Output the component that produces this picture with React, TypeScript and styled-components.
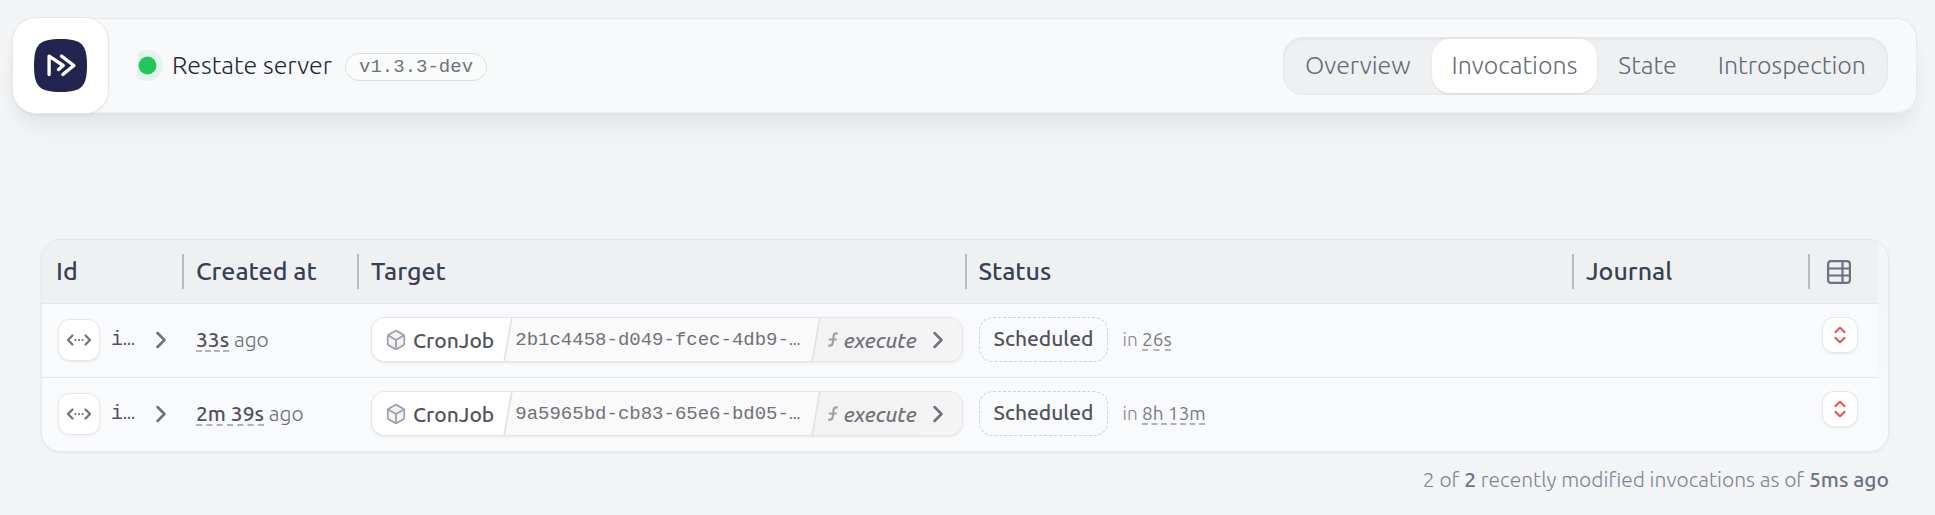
import React from "react";
import styled, { createGlobalStyle, css } from "styled-components";
import { Box, ChevronRight, ChevronsUpDown } from "lucide-react";

const sans = `Ubuntu, "Noto Sans", sans-serif`;
const mono = `"Liberation Mono", monospace`;

const GlobalStyle = createGlobalStyle`
  * { box-sizing: border-box; }
  body {
    margin: 0;
    background: #f3f4f6;
    font-family: ${sans};
    font-size: 21px;
    line-height: 28px;
    color: #52525b;
  }
  button { font: inherit; color: inherit; margin: 0; cursor: pointer; }
  svg { display: block; flex: none; }
`;

const Page = styled.div`
  padding: 18px 18px 24px 12px;
`;

const Header = styled.header`
  display: flex;
  align-items: center;
  height: 95px;
  padding-right: 28px;
  border: 1px solid #e5e7eb;
  border-bottom-color: #eceef1;
  border-left: 0;
  border-radius: 24px 20px 20px 24px;
  background: #f8f9fb;
  box-shadow: 0 12px 18px -4px rgba(0, 0, 0, 0.05), 0 24px 30px -6px rgba(0, 0, 0, 0.03);
`;

const LogoButton = styled.button`
  display: flex;
  align-items: center;
  justify-content: center;
  width: 97px;
  height: 97px;
  padding: 0;
  border: 1px solid #e5e7eb;
  border-radius: 24px;
  background: #fff;
  box-shadow: 0 1px 3px rgba(0, 0, 0, 0.05);
`;

const Server = styled.div`
  display: flex;
  align-items: center;
  flex: 1;
  margin-left: 28px;
`;

const ServerName = styled.span`
  margin: 0 13px 0 9px;
  padding-bottom: 2px;
  font-size: 25px;
  font-weight: 300;
  line-height: 32px;
  color: #1f2937;
`;

const Version = styled.span`
  margin-top: 3px;
  padding: 0 13px;
  border: 1px solid #dcdee2;
  border-radius: 14px;
  background: #fafbfb;
  font-family: ${mono};
  font-size: 19px;
  line-height: 26px;
  color: #71717a;
`;

const Tabs = styled.nav`
  display: flex;
  gap: 1px;
  padding: 1px;
  border: 1px solid #e5e7eb;
  border-radius: 20px;
  background: #eff0f2;
  box-shadow: inset 0 2px 2px rgba(0, 0, 0, 0.04);
`;

const Tab = styled.a<{ $active?: boolean }>`
  padding: 10px 20px 12px;
  border-radius: 18px;
  font-size: 25px;
  font-weight: 300;
  line-height: 32px;
  color: #646b79;
  text-decoration: none;
  ${(p) =>
    p.$active &&
    css`
      background: #fff;
      box-shadow: 0 1px 2px rgba(0, 0, 0, 0.1);
    `}
`;

const Main = styled.main`
  padding: 126px 28px 0 29px;
`;

const Card = styled.div`
  overflow: hidden;
  padding-right: 10px;
  border: 1px solid #e5e7eb;
  border-radius: 20px;
  background: linear-gradient(#f3f4f6, #f9fafb);
  box-shadow: 0 1px 3px rgba(0, 0, 0, 0.06);
`;

const Table = styled.table`
  width: 100%;
  table-layout: fixed;
  border-collapse: separate;
  border-spacing: 0;
`;

const Col = styled.col<{ $width?: number }>`
  width: ${(p) => (p.$width ? `${p.$width}px` : "auto")};
`;

const HeadLabel = styled.div<{ $divided?: boolean }>`
  display: flex;
  align-items: center;
  height: 35px;
  padding-left: 12px;
  line-height: 35px;
  border-right: ${(p) => (p.$divided ? "2px solid #b6bcc6" : "0")};
`;

const HeadCell = styled.th`
  height: 63px;
  padding: 0;
  background: #eff0f2;
  text-align: left;
  font-weight: 500;
  font-size: 25px;
  color: #374151;
  &:first-child ${HeadLabel} { padding-left: 14px; }
`;

const ColumnsButton = styled.button`
  display: flex;
  padding: 0;
  margin-left: 5px;
  border: 0;
  background: none;
  color: #6b7280;
`;

const Cell = styled.td<{ $top?: boolean }>`
  height: 74px;
  padding: 13px 4px 15px 12px;
  border-top: 1px solid #e5e7eb;
  background: #f9fafc;
  vertical-align: ${(p) => (p.$top ? "top" : "middle")};
`;

const IdCell = styled.div`
  display: flex;
  align-items: center;
  padding-left: 4px;
`;

const SquareButton = styled.button<{ $size: number }>`
  display: flex;
  align-items: center;
  justify-content: center;
  flex: none;
  width: ${(p) => p.$size}px;
  height: ${(p) => p.$size}px;
  padding: 0;
  border: 1px solid #e5e7eb;
  border-radius: 12px;
  background: #fff;
  box-shadow: 0 1px 3px rgba(0, 0, 0, 0.07);
`;

const IdText = styled.span`
  width: 36px;
  margin-left: 11px;
  font-family: ${mono};
  font-size: 20px;
  color: #52525b;
`;

const ArrowButton = styled.button`
  display: flex;
  padding: 0;
  border: 0;
  background: none;
  color: #71717a;
`;

const Relative = styled.div<{ $small?: boolean }>`
  padding-bottom: 2px;
  font-size: ${(p) => (p.$small ? 19 : 21)}px;
  font-weight: 300;
  color: ${(p) => (p.$small ? "#85858e" : "#6b6b74")};
`;

const Duration = styled.span<{ $small?: boolean }>`
  font-weight: ${(p) => (p.$small ? 400 : 500)};
  color: ${(p) => (p.$small ? "#7a7a83" : "#52525b")};
  text-decoration: underline dashed 2px #b1b3ba;
  text-underline-offset: 4px;
  text-decoration-skip-ink: none;
`;

const Target = styled.div`
  display: flex;
  height: 45px;
  overflow: hidden;
  border: 1px solid #e4e5e8;
  border-radius: 14px;
  background: #f3f3f4;
  box-shadow: 0 1px 3px rgba(0, 0, 0, 0.08);
`;

const Segment = styled.div`
  position: relative;
  display: flex;
  align-items: center;
  &::after {
    content: "";
    position: absolute;
    top: -1px;
    bottom: -1px;
    right: -4px;
    width: 12px;
    border-right: 2px solid #e4e4e7;
    background: inherit;
    transform: skewX(-10deg);
    z-index: -1;
  }
`;

const Service = styled(Segment)`
  z-index: 2;
  gap: 6px;
  padding: 0 11px 0 13px;
  background: #fff;
  font-weight: 500;
  color: #52525b;
  & > svg { color: #a1a1aa; }
`;

const Key = styled(Segment)`
  z-index: 1;
  flex: 1;
  min-width: 0;
  padding: 0 12px 0 10px;
  background: #fafafa;
  font-family: ${mono};
  font-size: 19px;
  color: #71717a;
`;

const Handler = styled.div`
  display: flex;
  align-items: center;
  gap: 6px;
  padding: 0 3px 0 15px;
  font-weight: 500;
  font-style: italic;
  color: #71717a;
`;

const TargetButton = styled.button`
  display: flex;
  align-items: center;
  width: 42px;
  padding: 0 0 0 4px;
  border: 0;
  background: #f4f4f4;
  color: #6b7280;
`;

const Status = styled.div`
  display: flex;
  align-items: center;
  gap: 14px;
`;

const StatusBadge = styled.span`
  padding: 6px 14px 9px;
  border: 1px dashed #cfd1d6;
  border-radius: 14px;
  font-weight: 500;
  color: #52525b;
`;

const Summary = styled.p`
  margin: 13px 0 0;
  text-align: right;
  font-weight: 300;
  color: #7d8492;
  strong { font-weight: 500; color: #6b7280; }
`;

const Logo = () => (
  <svg width="53" height="53" viewBox="0 0 158 158" aria-hidden="true">
    <path
      d="M79 0C142 0 158 16 158 79S142 158 79 158 0 142 0 79 16 0 79 0Z"
      fill="#22244f"
    />
    <g fill="none" stroke="#fff" strokeWidth="10" strokeLinecap="round" strokeLinejoin="round">
      <path d="M45 106V51L87 79 73 91" />
      <path d="M82 51 119 79 86 106" />
    </g>
  </svg>
);

const HealthDot = () => (
  <svg width="26" height="31" viewBox="0 0 26 31" role="img" aria-label="Healthy">
    <circle cx="10.5" cy="15.5" r="15.5" fill="#e3f5ea" />
    <circle cx="10.5" cy="15.5" r="9" fill="#22c55e" />
  </svg>
);

const ExpandIcon = () => (
  <svg width="26" height="12" viewBox="0 0 26 12" fill="none" stroke="#71717a" strokeWidth="2.2" strokeLinecap="round" strokeLinejoin="round" aria-hidden="true">
    <path d="M6.500 1.500 2 6l4.500 4.500M19.500 1.500 24 6l-4.500 4.500" />
    <path d="M9.500 6h.01M13 6h.01M16.500 6h.01" />
  </svg>
);

const ColumnsIcon = () => (
  <svg width="24" height="24" viewBox="0 0 24 24" fill="none" stroke="currentColor" strokeWidth="2.2" strokeLinecap="round" aria-hidden="true">
    <rect x="1.1" y="1.1" width="21.8" height="21.8" rx="3" />
    <path d="M1 8.500h22M1 15.500h22M15.500 1v22" />
  </svg>
);

const FunctionIcon = () => (
  <svg width="10" height="15" viewBox="0 0 10 15" fill="none" stroke="#a1a1aa" strokeWidth="2.2" aria-hidden="true">
    <path d="M9.800 1.300H8.300Q6 1.300 5.700 3.500L4.700 11Q4.300 13.600 2 13.600H.3M.8 7.500h8" />
  </svg>
);

type Invocation = { created: string; target: string; starts: string };

const invocations: Invocation[] = [
  { created: "33s", target: "2b1c4458-d049-fcec-4db9-…", starts: "26s" },
  { created: "2m 39s", target: "9a5965bd-cb83-65e6-bd05-…", starts: "8h 13m" },
];

const tabs = ["Overview", "Invocations", "State", "Introspection"];
const columns = ["Id", "Created at", "Target", "Status", "Journal"];

const InvocationRow = ({ created, target, starts }: Invocation) => (
  <tr>
    <Cell>
      <IdCell>
        <SquareButton $size={42} aria-label="Expand id"><ExpandIcon /></SquareButton>
        <IdText>i…</IdText>
        <ArrowButton aria-label="Open invocation"><ChevronRight size={28} strokeWidth={2.2} /></ArrowButton>
      </IdCell>
    </Cell>
    <Cell>
      <Relative><Duration>{created}</Duration> ago</Relative>
    </Cell>
    <Cell>
      <Target>
        <Service><Box size={22} fill="#f4f4f5" />CronJob</Service>
        <Key>{target}</Key>
        <Handler><FunctionIcon />execute</Handler>
        <TargetButton aria-label="Open handler"><ChevronRight size={28} strokeWidth={2.2} /></TargetButton>
      </Target>
    </Cell>
    <Cell>
      <Status>
        <StatusBadge>Scheduled</StatusBadge>
        <Relative $small>in <Duration $small>{starts}</Duration></Relative>
      </Status>
    </Cell>
    <Cell />
    <Cell $top>
      <SquareButton $size={36} aria-label="Actions"><ChevronsUpDown size={22} color="#ef4444" /></SquareButton>
    </Cell>
  </tr>
);

export default function App() {
  return (
    <>
      <GlobalStyle />
      <Page>
        <Header>
          <LogoButton aria-label="Restate"><Logo /></LogoButton>
          <Server>
            <HealthDot />
            <ServerName>Restate server</ServerName>
            <Version>v1.3.3-dev</Version>
          </Server>
          <Tabs>
            {tabs.map((t) => (
              <Tab key={t} href="#" $active={t === "Invocations"}>{t}</Tab>
            ))}
          </Tabs>
        </Header>
        <Main>
          <Card>
            <Table>
              <colgroup>
                <Col $width={142} />
                <Col $width={175} />
                <Col />
                <Col />
                <Col $width={236} />
                <Col $width={68} />
              </colgroup>
              <thead>
                <tr>
                  {columns.map((c) => (
                    <HeadCell key={c} scope="col"><HeadLabel $divided>{c}</HeadLabel></HeadCell>
                  ))}
                  <HeadCell>
                    <HeadLabel>
                      <ColumnsButton aria-label="Choose columns"><ColumnsIcon /></ColumnsButton>
                    </HeadLabel>
                  </HeadCell>
                </tr>
              </thead>
              <tbody>
                {invocations.map((i) => (
                  <InvocationRow {...i} key={i.target} />
                ))}
              </tbody>
            </Table>
          </Card>
          <Summary>
            2 of <strong>2</strong> recently modified invocations as of <strong>5ms ago</strong>
          </Summary>
        </Main>
      </Page>
    </>
  );
}
